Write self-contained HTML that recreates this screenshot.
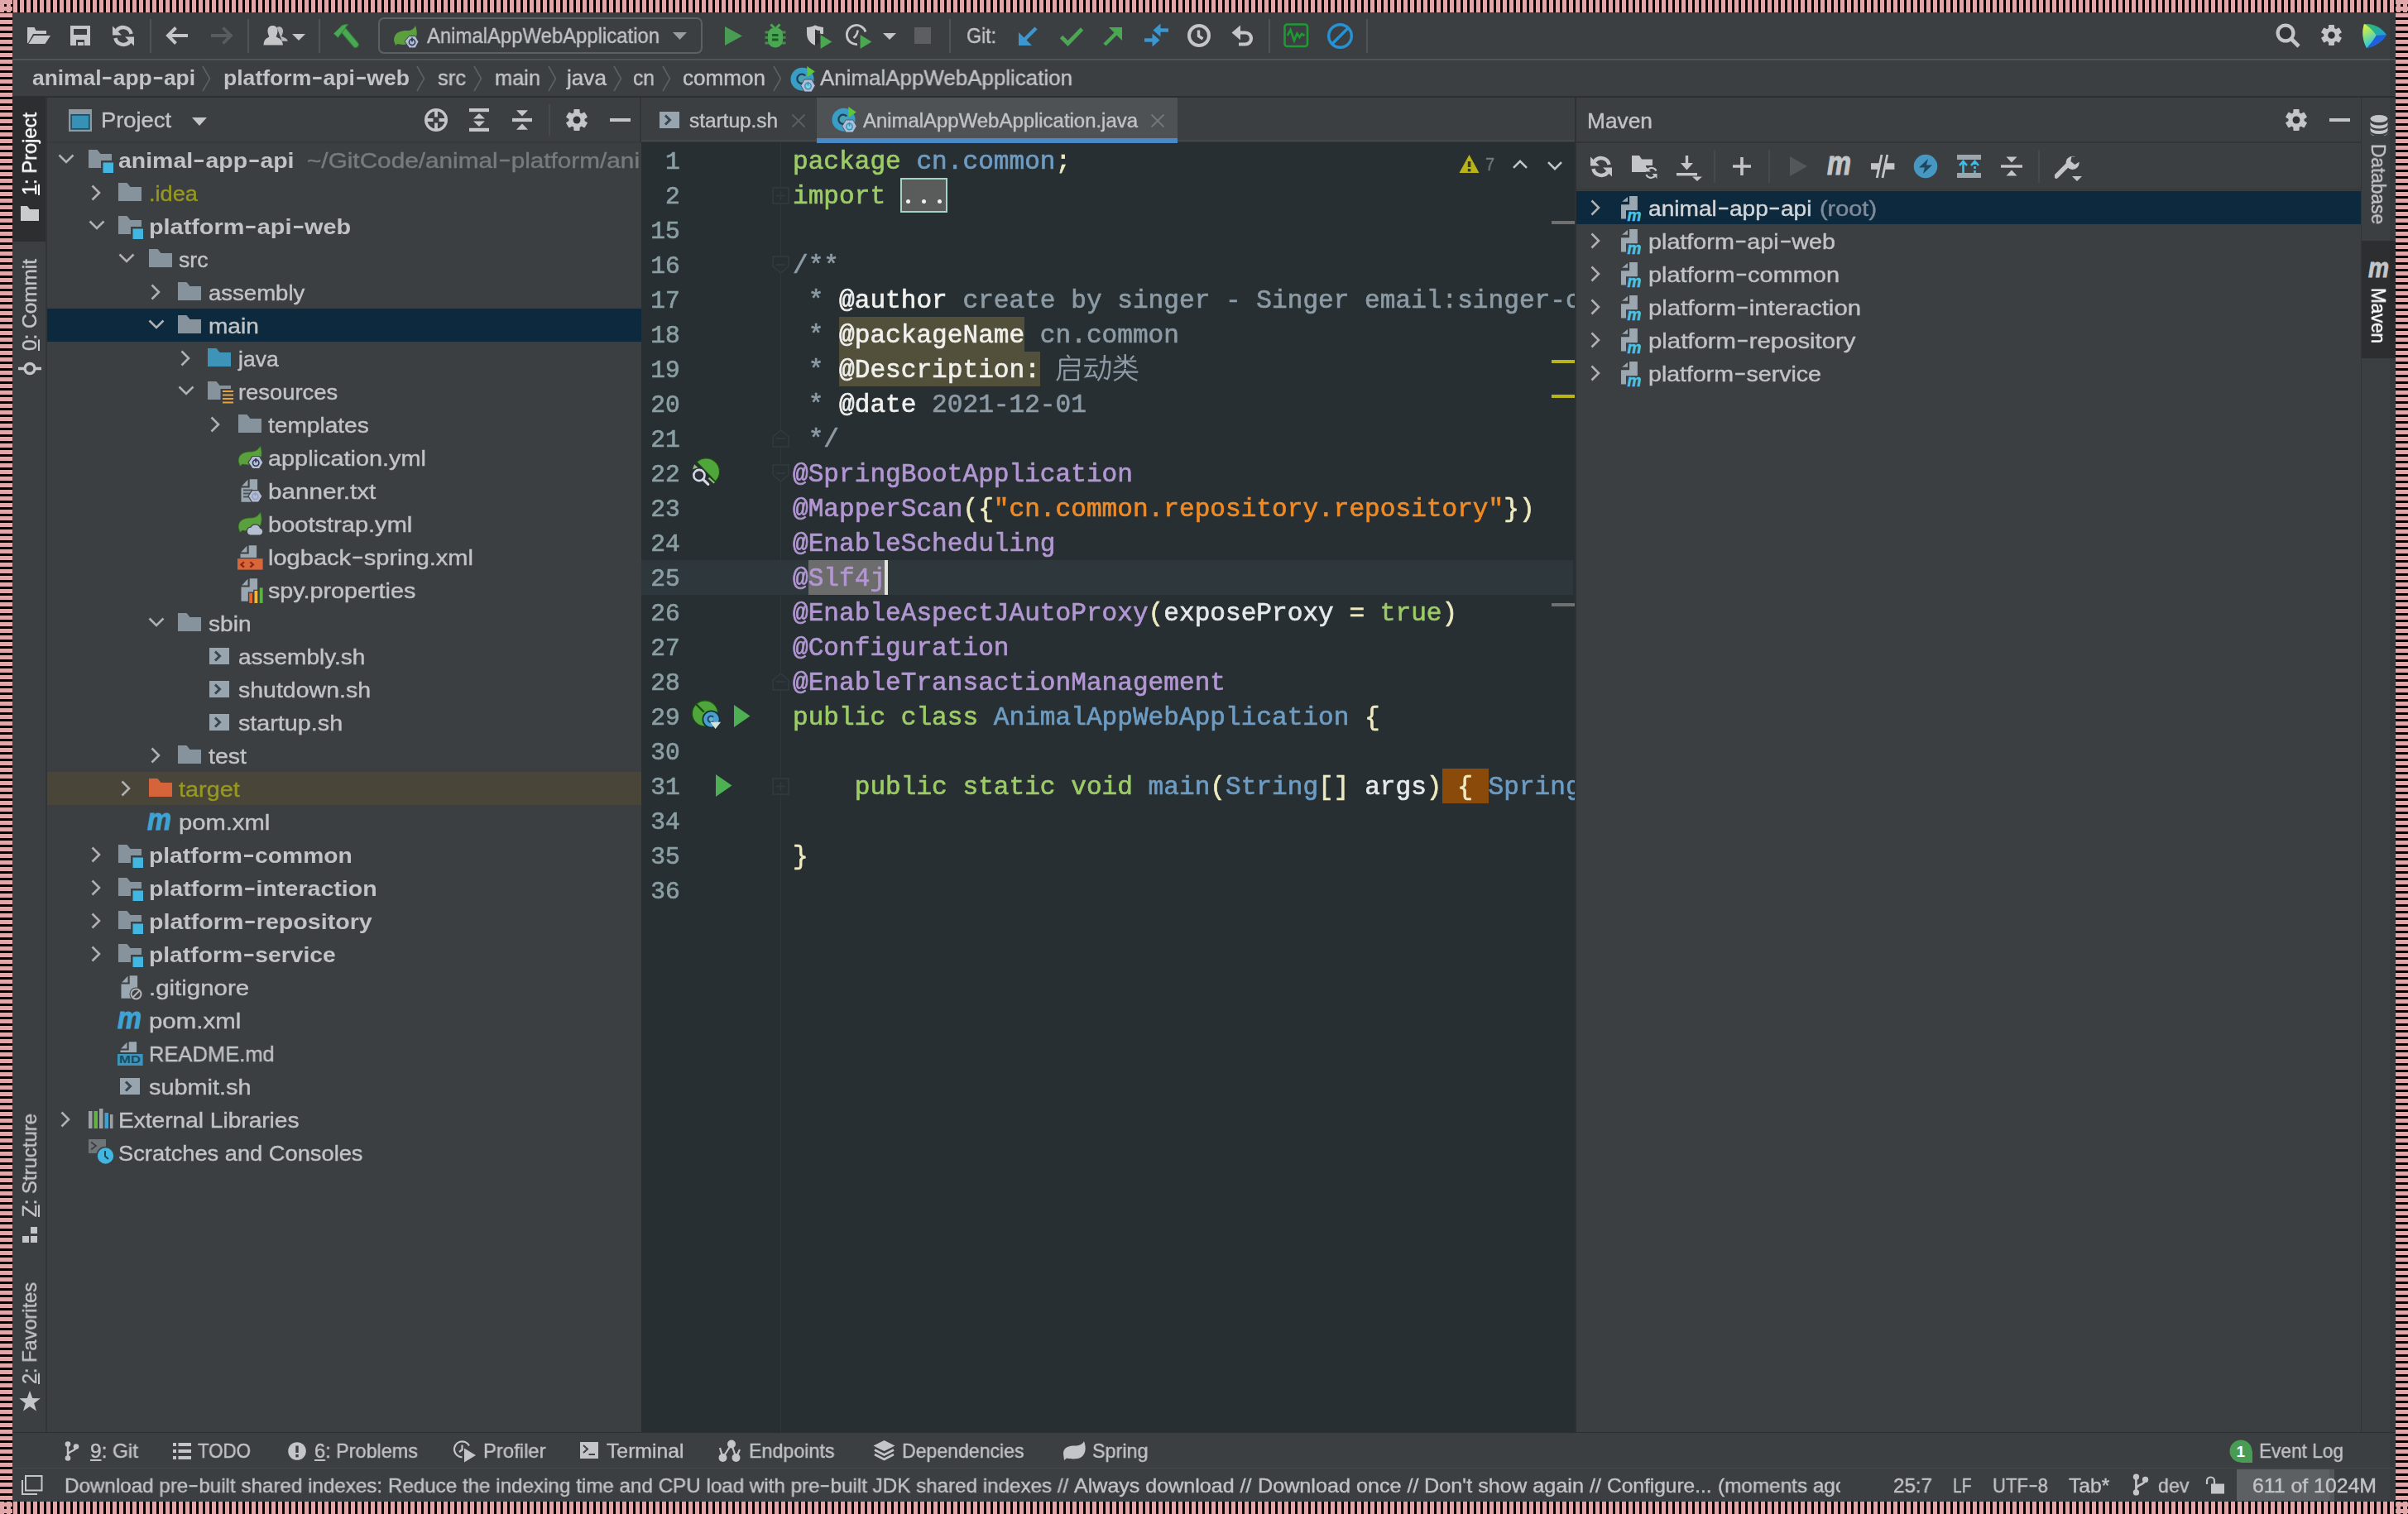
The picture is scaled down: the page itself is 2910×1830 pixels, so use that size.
<!DOCTYPE html>
<html><head><meta charset="utf-8"><title>IDE</title>
<style>
html,body{margin:0;padding:0;background:#000;}
body{width:2910px;height:1830px;position:relative;overflow:hidden;font-family:"Liberation Sans",sans-serif;}
div,span.t,svg{position:absolute;}
.t{white-space:pre;transform-origin:0 50%;display:block;will-change:transform;}
.s{font-family:"Liberation Sans",sans-serif;-webkit-text-stroke:0.4px;}
.m{font-family:"Liberation Mono",monospace;-webkit-text-stroke:0.65px;}
.cl{height:42px;line-height:42px;font-size:31.13px;}
i.hy{font-style:normal;display:inline-block;width:0.54em;text-align:center;transform:translateY(-0.075em) scaleX(1.55);}
</style></head>
<body>
<div style="left:0px;top:0px;width:2910px;height:15px;background:repeating-linear-gradient(90deg,#e2a7a8 0,#e2a7a8 5px,#000 5px,#000 8px);"></div>
<div style="left:0px;top:1815px;width:2910px;height:15px;background:repeating-linear-gradient(90deg,#e2a7a8 0,#e2a7a8 5px,#000 5px,#000 8px);"></div>
<div style="left:0px;top:0px;width:15px;height:1830px;background:repeating-linear-gradient(180deg,#e2a7a8 0,#e2a7a8 5px,#000 5px,#000 8px);"></div>
<div style="left:2895px;top:0px;width:15px;height:1830px;background:repeating-linear-gradient(180deg,#e2a7a8 0,#e2a7a8 5px,#000 5px,#000 8px);"></div>
<div style="left:0px;top:0px;width:15px;height:15px;background:#e2a7a8;"></div>
<div style="left:5px;top:5px;width:3px;height:3px;background:#000;"></div>
<div style="left:5px;top:13px;width:3px;height:2px;background:#000;"></div>
<div style="left:13px;top:5px;width:2px;height:3px;background:#000;"></div>
<div style="left:13px;top:13px;width:2px;height:2px;background:#000;"></div>
<div style="left:2895px;top:0px;width:15px;height:15px;background:#e2a7a8;"></div>
<div style="left:2895px;top:5px;width:1px;height:3px;background:#000;"></div>
<div style="left:2895px;top:13px;width:1px;height:2px;background:#000;"></div>
<div style="left:2901px;top:5px;width:3px;height:3px;background:#000;"></div>
<div style="left:2901px;top:13px;width:3px;height:2px;background:#000;"></div>
<div style="left:2909px;top:5px;width:1px;height:3px;background:#000;"></div>
<div style="left:2909px;top:13px;width:1px;height:2px;background:#000;"></div>
<div style="left:0px;top:1815px;width:15px;height:15px;background:#e2a7a8;"></div>
<div style="left:5px;top:1815px;width:3px;height:1px;background:#000;"></div>
<div style="left:5px;top:1821px;width:3px;height:3px;background:#000;"></div>
<div style="left:5px;top:1829px;width:3px;height:1px;background:#000;"></div>
<div style="left:13px;top:1815px;width:2px;height:1px;background:#000;"></div>
<div style="left:13px;top:1821px;width:2px;height:3px;background:#000;"></div>
<div style="left:13px;top:1829px;width:2px;height:1px;background:#000;"></div>
<div style="left:2895px;top:1815px;width:15px;height:15px;background:#e2a7a8;"></div>
<div style="left:2895px;top:1815px;width:1px;height:1px;background:#000;"></div>
<div style="left:2895px;top:1821px;width:1px;height:3px;background:#000;"></div>
<div style="left:2895px;top:1829px;width:1px;height:1px;background:#000;"></div>
<div style="left:2901px;top:1815px;width:3px;height:1px;background:#000;"></div>
<div style="left:2901px;top:1821px;width:3px;height:3px;background:#000;"></div>
<div style="left:2901px;top:1829px;width:3px;height:1px;background:#000;"></div>
<div style="left:2909px;top:1815px;width:1px;height:1px;background:#000;"></div>
<div style="left:2909px;top:1821px;width:1px;height:3px;background:#000;"></div>
<div style="left:2909px;top:1829px;width:1px;height:1px;background:#000;"></div>
<div style="left:15px;top:15px;width:2880px;height:1800px;background:#3c3f41;"></div>
<div style="left:15px;top:71px;width:2880px;height:2px;background:#4f5355;"></div>
<div style="left:15px;top:116px;width:2880px;height:2px;background:#2d2f31;"></div>
<div style="left:181px;top:23px;width:2px;height:41px;background:#505355;"></div>
<div style="left:299px;top:23px;width:2px;height:41px;background:#505355;"></div>
<div style="left:385px;top:23px;width:2px;height:41px;background:#505355;"></div>
<div style="left:1147px;top:23px;width:2px;height:41px;background:#505355;"></div>
<div style="left:1533px;top:23px;width:2px;height:41px;background:#505355;"></div>
<div style="left:1651px;top:23px;width:2px;height:41px;background:#505355;"></div>
<svg style="left:32px;top:31px" width="30" height="24" viewBox="0 0 30 24"><path d="M1 2 H9.5 L11.5 6 H24 V10 H8 L2 21 H1 Z" fill="#c3c5c7"/><path d="M9 12 H29 L22.5 22 H2.5 Z" fill="#c3c5c7"/></svg>
<svg style="left:85px;top:31px" width="24" height="24" viewBox="0 0 24 24"><path d="M0 0 H24 V24 H17 V17 H7 V24 H0 Z M4 4 V11 H20 V4 Z" fill="#c3c5c7" fill-rule="evenodd"/><rect x="9" y="20" width="7" height="4" fill="#c3c5c7"/></svg>
<svg style="left:135px;top:29.5px" width="28" height="27" viewBox="0 0 28 27"><path d="M23.6 11 A10 10 0 0 0 6 6.8" fill="none" stroke="#c3c5c7" stroke-width="4.4"/><path d="M4.4 16 A10 10 0 0 0 22 20.2" fill="none" stroke="#c3c5c7" stroke-width="4.4"/><path d="M1 1.5 V12.5 H12 Z" fill="#c3c5c7"/><path d="M27 25.5 V14.5 H16 Z" fill="#c3c5c7"/></svg>
<svg style="left:199px;top:31px" width="30" height="24" viewBox="0 0 30 24"><path d="M28 12 H5 M13.5 2.5 L4 12 L13.5 21.5" fill="none" stroke="#c3c5c7" stroke-width="3.9"/></svg>
<svg style="left:253px;top:31px" width="30" height="24" viewBox="0 0 30 24"><path d="M2 12 H25 M16.5 2.5 L26 12 L16.5 21.5" fill="none" stroke="#595c5e" stroke-width="3.8"/></svg>
<svg style="left:318px;top:30px" width="30" height="25" viewBox="0 0 30 25"><path d="M16.5 3 c4.5 -2 8 1 7.5 5.5 c-.3 2.6 -1.6 4 -1.8 5.6 c3 1.6 6.8 2 7.6 5.6 h-7 z" fill="#b4b6b8"/><path d="M5.5 7.5 C5.5 2.5 8.5 1 11.5 1 C14.5 1 17.5 2.5 17.5 7.5 C17.5 11 16 12.6 15.6 14.6 C18.5 16.4 23 16.6 24 24.5 H0.5 C1.2 16.6 4.5 16.4 7.4 14.6 C7 12.6 5.5 11 5.5 7.5 Z" fill="#c3c5c7"/></svg>
<svg style="left:353px;top:41px" width="16" height="8" viewBox="0 0 16 8"><path d="M0 0 H16 L8 8 Z" fill="#c3c5c7"/></svg>
<svg style="left:401px;top:27px" width="34" height="32" viewBox="0 0 34 32"><path d="M14 9.5 L28.6 26.8" stroke="#2f7d38" stroke-width="8.2" stroke-linecap="round" fill="none"/><path d="M14 9.5 L28.6 26.8" stroke="#4aa853" stroke-width="6.2" stroke-linecap="round" fill="none"/><path d="M2.2 13.6 L12.6 3.6 Q16 2 20 2.6 Q17 4.6 16.4 7 L7.4 18.6 Z" fill="#4aa853" stroke="#2f7d38" stroke-width="1"/></svg>
<div style="left:457px;top:21px;width:388px;height:40px;border:2px solid #5c6062;border-radius:7px"></div>
<svg style="left:475px;top:31px" width="32" height="28" viewBox="0 0 32 28"><path d="M1 18 C1 8 9 6 17 6 C22 6 25 4 27 0 C30 8 29 16 24 20 C18 24 9 23 5 22 L3 24 Z" fill="#5b9f3e"/><path d="M14 19 L19.5 12.5 L27 12.5 L31 19.5 L27 27 L19.5 27 Z" fill="#b5bdd6" stroke="#3c3f41" stroke-width="1"/><circle cx="23" cy="20" r="3.6" fill="none" stroke="#2b3a55" stroke-width="1.6"/><path d="M23 14.5 V19.5" stroke="#2b3a55" stroke-width="1.8"/></svg>
<span class="t s" style="left:516px;top:23.0px;height:40px;line-height:40px;font-size:26px;color:#c1c3c5;transform:scaleX(0.9185)">AnimalAppWebApplication</span>
<svg style="left:813px;top:39px" width="17" height="9" viewBox="0 0 17 9"><path d="M0 0 H17 L8.5 9 Z" fill="#9a9da0"/></svg>
<svg style="left:876px;top:32px" width="21" height="23" viewBox="0 0 21 23"><path d="M0 0 L21 11.5 L0 23 Z" fill="#499c54"/></svg>
<svg style="left:923px;top:28px" width="28" height="30" viewBox="0 0 28 30"><path d="M8.5 1.5 L13 6 M19.5 1.5 L15 6" stroke="#4aa853" stroke-width="3" fill="none"/><path d="M1.5 11 H26.5 M1.5 17.3 H26.5 M1.5 24 H26.5" stroke="#4aa853" stroke-width="2.8" opacity="0.75"/><path d="M14 5.5 C8 5.5 5 9 5 14 V20 C5 25.5 9 29.5 14 29.5 C19 29.5 23 25.5 23 20 V14 C23 9 20 5.5 14 5.5 Z" fill="#4aa853"/><path d="M10 14.5 H17.5 M10 20 H17.5" stroke="#1f5a2a" stroke-width="2.8"/></svg>
<svg style="left:974px;top:28px" width="33" height="32" viewBox="0 0 33 32"><path d="M1 5 C5 5 8 4 11 2.5 C14 4 17 5 21 5 V13 H17 V9 C15 9 13 8.5 11 7.5 V26.8 C5 24 1 20 1 12 Z" fill="#c4c6c8"/><path d="M11 7.5 V26.8 C13.5 25.5 15.5 24 17 22 V13 H13.5 V9.5 Z" fill="#2f3234"/><path d="M11 2.5 C14 4 17 5 21 5 V13 H17.5 V8.6 C15 8.4 13 7.8 11 6.8 Z" fill="#c4c6c8"/><path d="M17 13 L32.5 22.5 L17 32 Z" fill="#4aa853" stroke="#3c3f41" stroke-width="1.2"/></svg>
<svg style="left:1022px;top:28px" width="34" height="32" viewBox="0 0 34 32"><path d="M24 10.5 A11.6 11.6 0 1 0 14 25.6" fill="none" stroke="#c4c6c8" stroke-width="2.8"/><path d="M14.5 8.5 Q14.5 14 9.5 18" fill="none" stroke="#c4c6c8" stroke-width="2.6"/><path d="M17 13 L32.5 22.5 L17 32 Z" fill="#4aa853" stroke="#3c3f41" stroke-width="1.2"/></svg>
<svg style="left:1067px;top:40px" width="16" height="8" viewBox="0 0 16 8"><path d="M0 0 H16 L8 8 Z" fill="#c3c5c7"/></svg>
<div style="left:1105px;top:33px;width:20px;height:20px;background:#5c5e60;"></div>
<span class="t s" style="left:1168px;top:23.0px;height:40px;line-height:40px;font-size:26px;color:#c1c3c5;transform:scaleX(0.8899)">Git:</span>
<svg style="left:1229px;top:31px" width="26" height="26" viewBox="0 0 26 26"><path d="M23 3 L6 20" stroke="#3c97d0" stroke-width="4.4" fill="none"/><path d="M2 8 V24 H18 Z" fill="#3c97d0"/></svg>
<svg style="left:1280px;top:31px" width="30" height="26" viewBox="0 0 30 26"><path d="M2.5 13.5 L10.5 21.5 L27.5 4" stroke="#4aa853" stroke-width="4.8" fill="none"/></svg>
<svg style="left:1332px;top:31px" width="26" height="26" viewBox="0 0 26 26"><path d="M3 23 L20 6" stroke="#4aa853" stroke-width="4.4" fill="none"/><path d="M24 18 V2 H8 Z" fill="#4aa853"/></svg>
<svg style="left:1382px;top:28px" width="32" height="30" viewBox="0 0 32 30"><path d="M30 8.5 H18" stroke="#3c97d0" stroke-width="4.4"/><path d="M20.5 0.5 V16.5 L11.5 8.5 Z" fill="#3c97d0"/><path d="M1 20.5 H13" stroke="#3c97d0" stroke-width="4.4"/><path d="M10.5 12.5 V28.5 L19.5 20.5 Z" fill="#3c97d0"/></svg>
<svg style="left:1434px;top:28px" width="30" height="30" viewBox="0 0 30 30"><circle cx="15" cy="15" r="12" fill="none" stroke="#c3c5c7" stroke-width="4"/><path d="M14.5 8.5 V15.5 L19.5 19" fill="none" stroke="#c3c5c7" stroke-width="3.4"/></svg>
<svg style="left:1488px;top:28px" width="30" height="30" viewBox="0 0 30 30"><path d="M5 11.5 H17 A7 7 0 0 1 17 25.5 H9" fill="none" stroke="#c3c5c7" stroke-width="4.2"/><path d="M11 2.5 V20.5 L0.5 11.5 Z" fill="#c3c5c7"/></svg>
<svg style="left:1551px;top:28px" width="31" height="30" viewBox="0 0 31 30"><rect x="1.5" y="1.5" width="27.5" height="26.5" rx="3" fill="none" stroke="#1f9a33" stroke-width="2.6"/><path d="M5 15 L8.5 8 L13 21 L16.5 12.5 L19.5 17 L22 13 L25.5 15" fill="none" stroke="#1f9a33" stroke-width="2.6"/></svg>
<svg style="left:1603px;top:27px" width="33" height="33" viewBox="0 0 33 33"><circle cx="16.5" cy="16.5" r="13.8" fill="none" stroke="#2592d6" stroke-width="3.4"/><path d="M7 26 L26 7" stroke="#2592d6" stroke-width="3.4"/></svg>
<svg style="left:2750px;top:28px" width="31" height="31" viewBox="0 0 31 31"><circle cx="12" cy="12" r="9.4" fill="#323537" stroke="#c3c5c7" stroke-width="4.2"/><path d="M19 19 L28 28" stroke="#c3c5c7" stroke-width="4.6"/></svg>
<svg style="left:2805px;top:30px" width="25" height="25" viewBox="0 0 25 25"><rect x="9.00" y="0" width="7.00" height="25.00" rx="1" transform="rotate(0 12.5 12.5)" fill="#c3c5c7"/><rect x="9.00" y="0" width="7.00" height="25.00" rx="1" transform="rotate(60 12.5 12.5)" fill="#c3c5c7"/><rect x="9.00" y="0" width="7.00" height="25.00" rx="1" transform="rotate(120 12.5 12.5)" fill="#c3c5c7"/><circle cx="12.5" cy="12.5" r="9.25" fill="#c3c5c7"/><circle cx="12.5" cy="12.5" r="4.25" fill="#303335"/></svg>
<svg style="left:2854px;top:27px" width="32" height="32" viewBox="0 0 32 32"><defs><linearGradient id="lg1" x1="0" y1="0" x2="0.3" y2="1"><stop offset="0" stop-color="#f4f03c"/><stop offset="0.5" stop-color="#8fe07a"/><stop offset="1" stop-color="#27c3e8"/></linearGradient><linearGradient id="lg2" x1="0" y1="0" x2="1" y2="0.6"><stop offset="0" stop-color="#2fc14e"/><stop offset="1" stop-color="#1c9fe0"/></linearGradient></defs><path d="M3 2 C15 1 25 7 30 15 C24 24 16 29 6 31 C1 22 0 11 3 2 Z" fill="url(#lg2)"/><path d="M17 16 L30 15 C24 24 16 29 6 31 Z" fill="#1f5fe0"/><path d="M3 2 C9 5 15 11 17.5 16 C14 22 10 27 6 31 C1 22 0 11 3 2 Z" fill="url(#lg1)"/></svg>
<span class="t s" style="left:39px;top:74.0px;height:40px;line-height:40px;font-size:26px;color:#c1c3c5;font-weight:bold;-webkit-text-stroke:0;transform:scaleX(1.0142)">animal<i class="hy">-</i>app<i class="hy">-</i>api</span>
<svg style="left:243px;top:79px" width="14" height="32" viewBox="0 0 14 32"><path d="M2 1 L10.5 16 L2 31" fill="none" stroke="#5e6163" stroke-width="1.6"/></svg>
<span class="t s" style="left:270px;top:74.0px;height:40px;line-height:40px;font-size:26px;color:#c1c3c5;font-weight:bold;-webkit-text-stroke:0;transform:scaleX(1.0217)">platform<i class="hy">-</i>api<i class="hy">-</i>web</span>
<svg style="left:502px;top:79px" width="14" height="32" viewBox="0 0 14 32"><path d="M2 1 L10.5 16 L2 31" fill="none" stroke="#5e6163" stroke-width="1.6"/></svg>
<span class="t s" style="left:529px;top:74.0px;height:40px;line-height:40px;font-size:26px;color:#c1c3c5;transform:scaleX(0.9806)">src</span>
<svg style="left:571px;top:79px" width="14" height="32" viewBox="0 0 14 32"><path d="M2 1 L10.5 16 L2 31" fill="none" stroke="#5e6163" stroke-width="1.6"/></svg>
<span class="t s" style="left:598px;top:74.0px;height:40px;line-height:40px;font-size:26px;color:#c1c3c5;transform:scaleX(0.9759)">main</span>
<svg style="left:661px;top:79px" width="14" height="32" viewBox="0 0 14 32"><path d="M2 1 L10.5 16 L2 31" fill="none" stroke="#5e6163" stroke-width="1.6"/></svg>
<span class="t s" style="left:685px;top:74.0px;height:40px;line-height:40px;font-size:26px;color:#c1c3c5;transform:scaleX(1.0062)">java</span>
<svg style="left:740px;top:79px" width="14" height="32" viewBox="0 0 14 32"><path d="M2 1 L10.5 16 L2 31" fill="none" stroke="#5e6163" stroke-width="1.6"/></svg>
<span class="t s" style="left:765px;top:74.0px;height:40px;line-height:40px;font-size:26px;color:#c1c3c5;transform:scaleX(0.9465)">cn</span>
<svg style="left:799px;top:79px" width="14" height="32" viewBox="0 0 14 32"><path d="M2 1 L10.5 16 L2 31" fill="none" stroke="#5e6163" stroke-width="1.6"/></svg>
<span class="t s" style="left:825px;top:74.0px;height:40px;line-height:40px;font-size:26px;color:#c1c3c5;transform:scaleX(1.0030)">common</span>
<svg style="left:933px;top:79px" width="14" height="32" viewBox="0 0 14 32"><path d="M2 1 L10.5 16 L2 31" fill="none" stroke="#5e6163" stroke-width="1.6"/></svg>
<svg style="left:954.5px;top:79.5px" width="31" height="32" viewBox="0 0 31 32"><circle cx="14.5" cy="15.7" r="14" fill="#3a9dc6"/><circle cx="14" cy="15.3" r="5.6" fill="#4aa3b4"/><path d="M18.2 11.6 A5.6 5.6 0 1 0 18.2 19" fill="none" stroke="#1c4259" stroke-width="2.3"/><path d="M20.2 0 L29.8 6.4 L20.5 13 Z" fill="#5cc63c"/><path d="M12.8 23.5 L17.2 16 L25.8 16 L30.2 23.5 L25.8 31 L17.2 31 Z" fill="#b3bddb" stroke="#3c3f41" stroke-width="0.8"/><circle cx="21.5" cy="24" r="3.7" fill="#7fd0e0" stroke="#3f8fb4" stroke-width="1.5"/><path d="M21.5 18.8 V23.6" stroke="#3f8fb4" stroke-width="1.5"/></svg>
<span class="t s" style="left:991px;top:74.0px;height:40px;line-height:40px;font-size:26px;color:#c1c3c5;transform:scaleX(0.9970)">AnimalAppWebApplication</span>
<div style="left:55px;top:118px;width:1.5px;height:1613px;background:#323436;"></div>
<div style="left:15px;top:118px;width:40px;height:174px;background:#2c2e30;"></div>
<span class="t s" style="left:36px;top:221.0px;height:30px;line-height:30px;font-size:24px;color:#ffffff;transform:rotate(-90deg) scaleX(0.9863)"><u>1</u>: Project</span>
<svg style="left:25px;top:249px" width="22" height="18" viewBox="0 0 22 18"><path d="M0 0 H8 L11 4 H22 V18 H0 Z" fill="#c9cbcd"/></svg>
<span class="t s" style="left:36px;top:409.0px;height:30px;line-height:30px;font-size:24px;color:#c1c3c5;transform:rotate(-90deg) scaleX(1.0150)"><u>0</u>: Commit</span>
<svg style="left:22px;top:436px" width="28" height="19" viewBox="0 0 28 19"><circle cx="14" cy="9.5" r="6" fill="none" stroke="#c3c5c7" stroke-width="3.4"/><path d="M0 9.5 H7 M21 9.5 H28" stroke="#c3c5c7" stroke-width="3.4"/></svg>
<span class="t s" style="left:36px;top:1456.0px;height:30px;line-height:30px;font-size:24px;color:#c1c3c5;transform:rotate(-90deg) scaleX(0.9969)"><u>Z</u>: Structure</span>
<svg style="left:27px;top:1483px" width="19" height="20" viewBox="0 0 19 20"><rect x="10" y="0" width="8" height="8" fill="#c3c5c7"/><rect x="0" y="11" width="8" height="8" fill="#c3c5c7"/><rect x="10" y="11" width="8" height="8" fill="#c3c5c7"/></svg>
<span class="t s" style="left:36px;top:1658.0px;height:30px;line-height:30px;font-size:24px;color:#c1c3c5;transform:rotate(-90deg) scaleX(0.9809)"><u>2</u>: Favorites</span>
<svg style="left:23px;top:1681px" width="26" height="25" viewBox="0 0 26 25"><path d="M13 0 L16.2 9 L25.8 9.3 L18.2 15.2 L21 24.5 L13 19 L5 24.5 L7.8 15.2 L0.2 9.3 L9.8 9 Z" fill="#c3c5c7"/></svg>
<div style="left:57px;top:171px;width:718px;height:2px;background:#37393b;"></div>
<svg style="left:83px;top:132px" width="28" height="27" viewBox="0 0 28 27"><rect x="0" y="0" width="28" height="27" fill="#8f989f"/><rect x="2.3" y="6" width="23.4" height="18.7" fill="#1f4f66"/><rect x="4" y="7.8" width="20" height="15.2" fill="#3691b4"/></svg>
<span class="t s" style="left:122px;top:125.0px;height:40px;line-height:40px;font-size:26px;color:#c1c3c5;transform:scaleX(1.0504)">Project</span>
<svg style="left:232px;top:142px" width="18" height="10" viewBox="0 0 18 10"><path d="M0 0 H18 L9 10 Z" fill="#c3c5c7"/></svg>
<svg style="left:512px;top:130px" width="30" height="30" viewBox="0 0 30 30"><circle cx="15" cy="15" r="12.3" fill="none" stroke="#c3c5c7" stroke-width="3.4"/><path d="M15 2 V11.5 M15 18.5 V28 M2 15 H11.5 M18.5 15 H28" stroke="#c3c5c7" stroke-width="3.8"/></svg>
<svg style="left:567px;top:131px" width="24" height="28" viewBox="0 0 24 28"><rect x="0" y="0" width="24" height="4.2" fill="#c3c5c7"/><rect x="0" y="23.8" width="24" height="4.2" fill="#c3c5c7"/><path d="M12 6 L19 12.6 H5 Z M12 22 L19 15.4 H5 Z" fill="#c3c5c7"/></svg>
<svg style="left:619px;top:131px" width="24" height="28" viewBox="0 0 24 28"><rect x="0" y="11.9" width="24" height="4.2" fill="#c3c5c7"/><path d="M12 9.5 L19 2.3 H5 Z M12 18.5 L19 25.7 H5 Z" fill="#c3c5c7"/></svg>
<div style="left:663px;top:126px;width:2px;height:38px;background:#47494b;"></div>
<svg style="left:684px;top:132px" width="26" height="26" viewBox="0 0 26 26"><rect x="9.36" y="0" width="7.28" height="26.00" rx="1" transform="rotate(0 13.0 13.0)" fill="#c3c5c7"/><rect x="9.36" y="0" width="7.28" height="26.00" rx="1" transform="rotate(60 13.0 13.0)" fill="#c3c5c7"/><rect x="9.36" y="0" width="7.28" height="26.00" rx="1" transform="rotate(120 13.0 13.0)" fill="#c3c5c7"/><circle cx="13.0" cy="13.0" r="9.62" fill="#c3c5c7"/><circle cx="13.0" cy="13.0" r="4.42" fill="#303335"/></svg>
<div style="left:737px;top:143px;width:25px;height:4px;background:#c3c5c7;"></div>
<svg style="left:69px;top:184px" width="22" height="16" viewBox="0 0 22 16"><path d="M2.5 3.5 L11 12 L19.5 3.5" fill="none" stroke="#afb1b3" stroke-width="2.6"/></svg>
<svg style="left:106.5px;top:181px" width="32" height="30" viewBox="0 0 32 30"><path d="M0 0 H10.5 L14.5 5 H28 V22 H0 Z" fill="#87939c"/><rect x="15" y="13" width="17" height="17" fill="#3c3f41"/><rect x="17.5" y="15.5" width="12.5" height="12.5" fill="#40b6e0"/></svg>
<span class="t s" style="left:143px;top:174.0px;height:40px;line-height:40px;font-size:26px;color:#c1c3c5;font-weight:bold;-webkit-text-stroke:0;transform:scaleX(1.0940)">animal<i class="hy">-</i>app<i class="hy">-</i>api</span>
<svg style="left:107.5px;top:222px" width="16" height="22" viewBox="0 0 16 22"><path d="M3.5 2.5 L12 11 L3.5 19.5" fill="none" stroke="#afb1b3" stroke-width="2.6"/></svg>
<svg style="left:143.0px;top:221px" width="28" height="22" viewBox="0 0 28 22"><path d="M0 0 H10.5 L14.5 5 H28 V22 H0 Z" fill="#87939c"/></svg>
<span class="t s" style="left:179.5px;top:214.0px;height:40px;line-height:40px;font-size:26px;color:#96981f;transform:scaleX(1.0463)">.idea</span>
<svg style="left:105.5px;top:264px" width="22" height="16" viewBox="0 0 22 16"><path d="M2.5 3.5 L11 12 L19.5 3.5" fill="none" stroke="#afb1b3" stroke-width="2.6"/></svg>
<svg style="left:143.0px;top:261px" width="32" height="30" viewBox="0 0 32 30"><path d="M0 0 H10.5 L14.5 5 H28 V22 H0 Z" fill="#87939c"/><rect x="15" y="13" width="17" height="17" fill="#3c3f41"/><rect x="17.5" y="15.5" width="12.5" height="12.5" fill="#40b6e0"/></svg>
<span class="t s" style="left:179.5px;top:254.0px;height:40px;line-height:40px;font-size:26px;color:#c1c3c5;font-weight:bold;-webkit-text-stroke:0;transform:scaleX(1.1084)">platform<i class="hy">-</i>api<i class="hy">-</i>web</span>
<svg style="left:142px;top:304px" width="22" height="16" viewBox="0 0 22 16"><path d="M2.5 3.5 L11 12 L19.5 3.5" fill="none" stroke="#afb1b3" stroke-width="2.6"/></svg>
<svg style="left:179.5px;top:301px" width="28" height="22" viewBox="0 0 28 22"><path d="M0 0 H10.5 L14.5 5 H28 V22 H0 Z" fill="#87939c"/></svg>
<span class="t s" style="left:216px;top:294.0px;height:40px;line-height:40px;font-size:26px;color:#c1c3c5;transform:scaleX(1.0239)">src</span>
<svg style="left:179.5px;top:342px" width="16" height="22" viewBox="0 0 16 22"><path d="M3.5 2.5 L12 11 L3.5 19.5" fill="none" stroke="#afb1b3" stroke-width="2.6"/></svg>
<svg style="left:215.0px;top:341px" width="28" height="22" viewBox="0 0 28 22"><path d="M0 0 H10.5 L14.5 5 H28 V22 H0 Z" fill="#87939c"/></svg>
<span class="t s" style="left:251.5px;top:334.0px;height:40px;line-height:40px;font-size:26px;color:#c1c3c5;transform:scaleX(1.0589)">assembly</span>
<div style="left:56.5px;top:373px;width:718.5px;height:40px;background:#0d293e;"></div>
<svg style="left:177.5px;top:384px" width="22" height="16" viewBox="0 0 22 16"><path d="M2.5 3.5 L11 12 L19.5 3.5" fill="none" stroke="#afb1b3" stroke-width="2.6"/></svg>
<svg style="left:215.0px;top:381px" width="28" height="22" viewBox="0 0 28 22"><path d="M0 0 H10.5 L14.5 5 H28 V22 H0 Z" fill="#87939c"/></svg>
<span class="t s" style="left:251.5px;top:374.0px;height:40px;line-height:40px;font-size:26px;color:#c1c3c5;transform:scaleX(1.0788)">main</span>
<svg style="left:215.5px;top:422px" width="16" height="22" viewBox="0 0 16 22"><path d="M3.5 2.5 L12 11 L3.5 19.5" fill="none" stroke="#afb1b3" stroke-width="2.6"/></svg>
<svg style="left:251.0px;top:421px" width="28" height="22" viewBox="0 0 28 22"><path d="M0 0 H10.5 L14.5 5 H28 V22 H0 Z" fill="#3d93b8"/></svg>
<span class="t s" style="left:287.5px;top:414.0px;height:40px;line-height:40px;font-size:26px;color:#c1c3c5;transform:scaleX(1.0209)">java</span>
<svg style="left:213.5px;top:464px" width="22" height="16" viewBox="0 0 22 16"><path d="M2.5 3.5 L11 12 L19.5 3.5" fill="none" stroke="#afb1b3" stroke-width="2.6"/></svg>
<svg style="left:251.0px;top:461px" width="32" height="30" viewBox="0 0 32 30"><path d="M0 0 H10.5 L14.5 5 H28 V22 H0 Z" fill="#87939c"/><rect x="15.5" y="9" width="17" height="18" fill="#3c3f41"/><path d="M18 12 H31 M18 16.5 H31 M18 21 H31 M18 25.5 H31" stroke="#e8a33d" stroke-width="2.2"/></svg>
<span class="t s" style="left:287.5px;top:454.0px;height:40px;line-height:40px;font-size:26px;color:#c1c3c5;transform:scaleX(1.0521)">resources</span>
<svg style="left:252px;top:502px" width="16" height="22" viewBox="0 0 16 22"><path d="M3.5 2.5 L12 11 L3.5 19.5" fill="none" stroke="#afb1b3" stroke-width="2.6"/></svg>
<svg style="left:287.5px;top:501px" width="28" height="22" viewBox="0 0 28 22"><path d="M0 0 H10.5 L14.5 5 H28 V22 H0 Z" fill="#87939c"/></svg>
<span class="t s" style="left:324px;top:494.0px;height:40px;line-height:40px;font-size:26px;color:#c1c3c5;transform:scaleX(1.0804)">templates</span>
<svg style="left:287.5px;top:538px" width="32" height="30" viewBox="0 0 32 30"><path d="M0 19.5 C0 10 8 8 15 8 C20 8 24 6 26.5 1 C29.5 9 28.5 17 23.5 21 C18 25 9 24 5 23 L2 25.5 Z" fill="#5aa03c" stroke="#2f6a22" stroke-width="0.8"/><path d="M12 21 L17 13.5 L25.5 13.5 L30 21 L25.5 28.5 L17 28.5 Z" fill="#b5bdd6" stroke="#3c3f41" stroke-width="1.2"/><circle cx="21.2" cy="21.5" r="3.7" fill="none" stroke="#2b3a55" stroke-width="1.6"/><path d="M21.2 16 V21" stroke="#2b3a55" stroke-width="1.8"/></svg>
<span class="t s" style="left:324px;top:534.0px;height:40px;line-height:40px;font-size:26px;color:#c1c3c5;transform:scaleX(1.1106)">application.yml</span>
<svg style="left:287.5px;top:578px" width="32" height="31" viewBox="0 0 32 31"><path d="M11.5 1.7 V9.6 H4.2 Z" fill="#9aa6b0"/><path d="M13.7 1.2 H23.1 V28.8 H3.5 V11.4 H13.7 Z" fill="#9aa6b0"/><path d="M6 14.5 H17 M6 18.5 H14 M6 22.5 H12" stroke="#4a545c" stroke-width="1.8"/><path d="M12 21.8 L16.5 14.6 L24.5 14.6 L29 21.8 L24.5 29 L16.5 29 Z" fill="#b5bdd6" stroke="#3c3f41" stroke-width="1.2"/><circle cx="20.5" cy="22" r="3.5" fill="none" stroke="#8fa0c4" stroke-width="1.5"/><path d="M20.5 16.8 V21.4" stroke="#8fa0c4" stroke-width="1.6"/></svg>
<span class="t s" style="left:324px;top:574.0px;height:40px;line-height:40px;font-size:26px;color:#c1c3c5;transform:scaleX(1.1401)">banner.txt</span>
<svg style="left:287.5px;top:618px" width="32" height="31" viewBox="0 0 32 31"><path d="M0 19.5 C0 10 8 8 15 8 C20 8 24 6 26.5 1 C29.5 9 28.5 17 23.5 21 C18 25 9 24 5 23 L2 25.5 Z" fill="#5aa03c" stroke="#2f6a22" stroke-width="0.8"/><path d="M14 29 a5 5 0 0 1 1 -9.8 a6.3 6.3 0 0 1 11.5 1 a4.6 4.6 0 0 1 0 8.8 Z" fill="#b4bfd0" stroke="#3c3f41" stroke-width="1.2"/></svg>
<span class="t s" style="left:324px;top:614.0px;height:40px;line-height:40px;font-size:26px;color:#c1c3c5;transform:scaleX(1.1167)">bootstrap.yml</span>
<svg style="left:286.5px;top:658px" width="32" height="32" viewBox="0 0 32 32"><path d="M11.5 1.7 V9.6 H4.2 Z" fill="#9aa6b0"/><path d="M13.7 1.2 H23.1 V16 H3.5 V11.4 H13.7 Z" fill="#9aa6b0"/><rect x="0" y="17.2" width="30.6" height="13.4" fill="#d9663a"/><path d="M8 21.3 L4.3 24.4 L8 27.6 M15.3 21.3 L19 24.4 L15.3 27.6" fill="none" stroke="#8a2510" stroke-width="2.1"/></svg>
<span class="t s" style="left:324px;top:654.0px;height:40px;line-height:40px;font-size:26px;color:#c1c3c5;transform:scaleX(1.1164)">logback<i class="hy">-</i>spring.xml</span>
<svg style="left:287.5px;top:698px" width="32" height="32" viewBox="0 0 32 32"><path d="M11.5 1.7 V9.6 H4.2 Z" fill="#9aa6b0"/><path d="M13.7 1.2 H23.1 V28.8 H3.5 V11.4 H13.7 Z" fill="#9aa6b0"/><path d="M11.8 17.6 H18.2 V14.8 H24.5 V11.2 H31 V32 H11.8 Z" fill="#3c3f41"/><rect x="13.2" y="18.8" width="3.8" height="12.2" fill="#e8672c"/><rect x="19.5" y="16" width="3.8" height="15" fill="#f2b73c"/><rect x="25.8" y="12.4" width="3.8" height="18.6" fill="#59b244"/></svg>
<span class="t s" style="left:324px;top:694.0px;height:40px;line-height:40px;font-size:26px;color:#c1c3c5;transform:scaleX(1.1049)">spy.properties</span>
<svg style="left:177.5px;top:744px" width="22" height="16" viewBox="0 0 22 16"><path d="M2.5 3.5 L11 12 L19.5 3.5" fill="none" stroke="#afb1b3" stroke-width="2.6"/></svg>
<svg style="left:215.0px;top:741px" width="28" height="22" viewBox="0 0 28 22"><path d="M0 0 H10.5 L14.5 5 H28 V22 H0 Z" fill="#87939c"/></svg>
<span class="t s" style="left:251.5px;top:734.0px;height:40px;line-height:40px;font-size:26px;color:#c1c3c5;transform:scaleX(1.0796)">sbin</span>
<svg style="left:253.0px;top:783px" width="24" height="20" viewBox="0 0 24 20"><rect x="0" y="0" width="24" height="20" fill="#98a5ae"/><path d="M7 4.5 L12.5 10 L7 15.5" fill="none" stroke="#39464f" stroke-width="3"/></svg>
<span class="t s" style="left:287.5px;top:774.0px;height:40px;line-height:40px;font-size:26px;color:#c1c3c5;transform:scaleX(1.0759)">assembly.sh</span>
<svg style="left:253.0px;top:823px" width="24" height="20" viewBox="0 0 24 20"><rect x="0" y="0" width="24" height="20" fill="#98a5ae"/><path d="M7 4.5 L12.5 10 L7 15.5" fill="none" stroke="#39464f" stroke-width="3"/></svg>
<span class="t s" style="left:287.5px;top:814.0px;height:40px;line-height:40px;font-size:26px;color:#c1c3c5;transform:scaleX(1.0960)">shutdown.sh</span>
<svg style="left:253.0px;top:863px" width="24" height="20" viewBox="0 0 24 20"><rect x="0" y="0" width="24" height="20" fill="#98a5ae"/><path d="M7 4.5 L12.5 10 L7 15.5" fill="none" stroke="#39464f" stroke-width="3"/></svg>
<span class="t s" style="left:287.5px;top:854.0px;height:40px;line-height:40px;font-size:26px;color:#c1c3c5;transform:scaleX(1.1045)">startup.sh</span>
<svg style="left:179.5px;top:902px" width="16" height="22" viewBox="0 0 16 22"><path d="M3.5 2.5 L12 11 L3.5 19.5" fill="none" stroke="#afb1b3" stroke-width="2.6"/></svg>
<svg style="left:215.0px;top:901px" width="28" height="22" viewBox="0 0 28 22"><path d="M0 0 H10.5 L14.5 5 H28 V22 H0 Z" fill="#87939c"/></svg>
<span class="t s" style="left:251.5px;top:894.0px;height:40px;line-height:40px;font-size:26px;color:#c1c3c5;transform:scaleX(1.0925)">test</span>
<div style="left:56.5px;top:933px;width:718.5px;height:40px;background:#494539;"></div>
<svg style="left:144px;top:942px" width="16" height="22" viewBox="0 0 16 22"><path d="M3.5 2.5 L12 11 L3.5 19.5" fill="none" stroke="#afb1b3" stroke-width="2.6"/></svg>
<svg style="left:179.5px;top:941px" width="28" height="22" viewBox="0 0 28 22"><path d="M0 0 H10.5 L14.5 5 H28 V22 H0 Z" fill="#d6643a"/></svg>
<span class="t s" style="left:216px;top:934.0px;height:40px;line-height:40px;font-size:26px;color:#96981f;transform:scaleX(1.1083)">target</span>
<svg style="left:175.0px;top:980.2px" width="38" height="27.8" viewBox="0 0 38 27.8"><text x="3" y="22.80" font-family="Liberation Sans" font-weight="bold" font-style="italic" font-size="37.36" fill="#3ea3d2" stroke="#3ea3d2" stroke-width="1.0" textLength="29" lengthAdjust="spacingAndGlyphs">m</text></svg>
<span class="t s" style="left:216px;top:974.0px;height:40px;line-height:40px;font-size:26px;color:#c1c3c5;transform:scaleX(1.1216)">pom.xml</span>
<svg style="left:107.5px;top:1022px" width="16" height="22" viewBox="0 0 16 22"><path d="M3.5 2.5 L12 11 L3.5 19.5" fill="none" stroke="#afb1b3" stroke-width="2.6"/></svg>
<svg style="left:143.0px;top:1021px" width="32" height="30" viewBox="0 0 32 30"><path d="M0 0 H10.5 L14.5 5 H28 V22 H0 Z" fill="#87939c"/><rect x="15" y="13" width="17" height="17" fill="#3c3f41"/><rect x="17.5" y="15.5" width="12.5" height="12.5" fill="#40b6e0"/></svg>
<span class="t s" style="left:179.5px;top:1014.0px;height:40px;line-height:40px;font-size:26px;color:#c1c3c5;font-weight:bold;-webkit-text-stroke:0;transform:scaleX(1.0854)">platform<i class="hy">-</i>common</span>
<svg style="left:107.5px;top:1062px" width="16" height="22" viewBox="0 0 16 22"><path d="M3.5 2.5 L12 11 L3.5 19.5" fill="none" stroke="#afb1b3" stroke-width="2.6"/></svg>
<svg style="left:143.0px;top:1061px" width="32" height="30" viewBox="0 0 32 30"><path d="M0 0 H10.5 L14.5 5 H28 V22 H0 Z" fill="#87939c"/><rect x="15" y="13" width="17" height="17" fill="#3c3f41"/><rect x="17.5" y="15.5" width="12.5" height="12.5" fill="#40b6e0"/></svg>
<span class="t s" style="left:179.5px;top:1054.0px;height:40px;line-height:40px;font-size:26px;color:#c1c3c5;font-weight:bold;-webkit-text-stroke:0;transform:scaleX(1.0982)">platform<i class="hy">-</i>interaction</span>
<svg style="left:107.5px;top:1102px" width="16" height="22" viewBox="0 0 16 22"><path d="M3.5 2.5 L12 11 L3.5 19.5" fill="none" stroke="#afb1b3" stroke-width="2.6"/></svg>
<svg style="left:143.0px;top:1101px" width="32" height="30" viewBox="0 0 32 30"><path d="M0 0 H10.5 L14.5 5 H28 V22 H0 Z" fill="#87939c"/><rect x="15" y="13" width="17" height="17" fill="#3c3f41"/><rect x="17.5" y="15.5" width="12.5" height="12.5" fill="#40b6e0"/></svg>
<span class="t s" style="left:179.5px;top:1094.0px;height:40px;line-height:40px;font-size:26px;color:#c1c3c5;font-weight:bold;-webkit-text-stroke:0;transform:scaleX(1.1000)">platform<i class="hy">-</i>repository</span>
<svg style="left:107.5px;top:1142px" width="16" height="22" viewBox="0 0 16 22"><path d="M3.5 2.5 L12 11 L3.5 19.5" fill="none" stroke="#afb1b3" stroke-width="2.6"/></svg>
<svg style="left:143.0px;top:1141px" width="32" height="30" viewBox="0 0 32 30"><path d="M0 0 H10.5 L14.5 5 H28 V22 H0 Z" fill="#87939c"/><rect x="15" y="13" width="17" height="17" fill="#3c3f41"/><rect x="17.5" y="15.5" width="12.5" height="12.5" fill="#40b6e0"/></svg>
<span class="t s" style="left:179.5px;top:1134.0px;height:40px;line-height:40px;font-size:26px;color:#c1c3c5;font-weight:bold;-webkit-text-stroke:0;transform:scaleX(1.0872)">platform<i class="hy">-</i>service</span>
<svg style="left:143.0px;top:1178px" width="32" height="32" viewBox="0 0 32 32"><path d="M11.5 1.7 V9.6 H4.2 Z" fill="#9aa6b0"/><path d="M13.7 1.2 H23.1 V28.8 H3.5 V11.4 H13.7 Z" fill="#9aa6b0"/><circle cx="21.5" cy="23.5" r="8" fill="#3c3f41"/><circle cx="21.5" cy="23.5" r="6" fill="none" stroke="#b4b6b8" stroke-width="2"/><path d="M17.5 27.5 L25.5 19.5" stroke="#b4b6b8" stroke-width="2"/></svg>
<span class="t s" style="left:179.5px;top:1174.0px;height:40px;line-height:40px;font-size:26px;color:#c1c3c5;transform:scaleX(1.1330)">.gitignore</span>
<svg style="left:138.5px;top:1220.2px" width="38" height="27.8" viewBox="0 0 38 27.8"><text x="3" y="22.80" font-family="Liberation Sans" font-weight="bold" font-style="italic" font-size="37.36" fill="#3ea3d2" stroke="#3ea3d2" stroke-width="1.0" textLength="29" lengthAdjust="spacingAndGlyphs">m</text></svg>
<span class="t s" style="left:179.5px;top:1214.0px;height:40px;line-height:40px;font-size:26px;color:#c1c3c5;transform:scaleX(1.1318)">pom.xml</span>
<svg style="left:142.0px;top:1258px" width="32" height="32" viewBox="0 0 32 32"><path d="M11.5 1.7 V9.6 H4.2 Z" fill="#9aa6b0"/><path d="M13.7 1.2 H23.1 V14 H3.5 V11.4 H13.7 Z" fill="#9aa6b0"/><rect x="0" y="16" width="30.6" height="14" fill="#3a96be"/><text x="2" y="27.3" font-family="Liberation Sans" font-weight="bold" font-size="12.5" fill="#1d4a60" textLength="26" lengthAdjust="spacingAndGlyphs">MD</text></svg>
<span class="t s" style="left:179.5px;top:1254.0px;height:40px;line-height:40px;font-size:26px;color:#c1c3c5;transform:scaleX(0.9814)">README.md</span>
<svg style="left:145.0px;top:1303px" width="24" height="20" viewBox="0 0 24 20"><rect x="0" y="0" width="24" height="20" fill="#98a5ae"/><path d="M7 4.5 L12.5 10 L7 15.5" fill="none" stroke="#39464f" stroke-width="3"/></svg>
<span class="t s" style="left:179.5px;top:1294.0px;height:40px;line-height:40px;font-size:26px;color:#c1c3c5;transform:scaleX(1.1100)">submit.sh</span>
<svg style="left:71px;top:1342px" width="16" height="22" viewBox="0 0 16 22"><path d="M3.5 2.5 L12 11 L3.5 19.5" fill="none" stroke="#afb1b3" stroke-width="2.6"/></svg>
<svg style="left:106.5px;top:1338px" width="32" height="30" viewBox="0 0 32 30"><rect x="0" y="5" width="4.5" height="21" fill="#9aa0a6"/><rect x="6.5" y="5" width="4.5" height="21" fill="#62b543"/><rect x="13" y="2" width="4.5" height="24" fill="#9aa0a6"/><rect x="19.5" y="7" width="4.5" height="19" fill="#40a0d0"/><rect x="26" y="9" width="3.5" height="17" fill="#9aa0a6"/></svg>
<span class="t s" style="left:143px;top:1334.0px;height:40px;line-height:40px;font-size:26px;color:#c1c3c5;transform:scaleX(1.0800)">External Libraries</span>
<svg style="left:106.5px;top:1377px" width="34" height="32" viewBox="0 0 34 32"><rect x="0" y="0" width="21" height="17" fill="#6e7478"/><path d="M3 3.5 L9 8 L3 12.5" fill="none" stroke="#3c3f41" stroke-width="1.8"/><circle cx="20.5" cy="20" r="10.5" fill="#40b6e0" stroke="#3c3f41" stroke-width="1.6"/><path d="M20 14 V20.5 L24 24" fill="none" stroke="#20455a" stroke-width="2"/></svg>
<span class="t s" style="left:143px;top:1374.0px;height:40px;line-height:40px;font-size:26px;color:#c1c3c5;transform:scaleX(1.0485)">Scratches and Consoles</span>
<div style="left:368px;top:173px;width:407px;height:40px;overflow:hidden">
<span class="t s" style="left:2.5px;top:1.0px;height:40px;line-height:40px;font-size:26px;color:#787b7d;transform:scaleX(1.1437)">~/GitCode/animal<i class="hy">-</i>platform/ani</span>
</div>
<div style="left:775px;top:171.5px;width:1128px;height:1559.5px;background:#272f32;"></div>
<div style="left:773px;top:118px;width:2px;height:54px;background:#333537;"></div>
<div style="left:775px;top:169px;width:1128px;height:1.5px;background:#43474a;"></div>
<div style="left:775px;top:170.5px;width:1128px;height:1px;background:#35383a;"></div>
<div style="left:987px;top:118px;width:436px;height:49.5px;background:#4e5254;"></div>
<div style="left:987px;top:167px;width:436px;height:6px;background:#4a88c7;"></div>
<svg style="left:797px;top:135px" width="24" height="20" viewBox="0 0 24 20"><rect width="24" height="20" fill="#98a5ae"/><path d="M7 4.5 L12.5 10 L7 15.5" fill="none" stroke="#39464f" stroke-width="3"/></svg>
<span class="t s" style="left:833px;top:126.0px;height:40px;line-height:40px;font-size:23px;color:#c1c3c5;transform:scaleX(1.0594)">startup.sh</span>
<svg style="left:956px;top:137px" width="18" height="18" viewBox="0 0 18 18"><path d="M1.5 1.5 L16.5 16.5 M16.5 1.5 L1.5 16.5" stroke="#5c5f61" stroke-width="1.8"/></svg>
<svg style="left:1004.5px;top:128.5px" width="31" height="32" viewBox="0 0 31 32"><circle cx="14.5" cy="15.7" r="14" fill="#3a9dc6"/><circle cx="14" cy="15.3" r="5.6" fill="#4aa3b4"/><path d="M18.2 11.6 A5.6 5.6 0 1 0 18.2 19" fill="none" stroke="#1c4259" stroke-width="2.3"/><path d="M20.2 0 L29.8 6.4 L20.5 13 Z" fill="#5cc63c"/><path d="M12.8 23.5 L17.2 16 L25.8 16 L30.2 23.5 L25.8 31 L17.2 31 Z" fill="#b3bddb" stroke="#4e5254" stroke-width="0.8"/><circle cx="21.5" cy="24" r="3.7" fill="#7fd0e0" stroke="#3f8fb4" stroke-width="1.5"/><path d="M21.5 18.8 V23.6" stroke="#3f8fb4" stroke-width="1.5"/></svg>
<span class="t s" style="left:1043px;top:126.0px;height:40px;line-height:40px;font-size:23px;color:#c1c3c5;transform:scaleX(1.0400)">AnimalAppWebApplication.java</span>
<svg style="left:1390px;top:137px" width="18" height="18" viewBox="0 0 18 18"><path d="M1.5 1.5 L16.5 16.5 M16.5 1.5 L1.5 16.5" stroke="#74777a" stroke-width="1.8"/></svg>
<div style="left:775px;top:677px;width:1126px;height:42px;background:#2e373b;"></div>
<div style="left:943px;top:173px;width:1px;height:1558px;background:#2e373b;"></div>
<span class="t m" style="left:747.28px;top:174.8px;width:74.72px;text-align:right;height:42px;line-height:42px;font-size:29.6px;color:#8a9fa3">1</span>
<span class="t m" style="left:747.28px;top:216.8px;width:74.72px;text-align:right;height:42px;line-height:42px;font-size:29.6px;color:#8a9fa3">2</span>
<span class="t m" style="left:747.28px;top:258.8px;width:74.72px;text-align:right;height:42px;line-height:42px;font-size:29.6px;color:#8a9fa3">15</span>
<span class="t m" style="left:747.28px;top:300.8px;width:74.72px;text-align:right;height:42px;line-height:42px;font-size:29.6px;color:#8a9fa3">16</span>
<span class="t m" style="left:747.28px;top:342.8px;width:74.72px;text-align:right;height:42px;line-height:42px;font-size:29.6px;color:#8a9fa3">17</span>
<span class="t m" style="left:747.28px;top:384.8px;width:74.72px;text-align:right;height:42px;line-height:42px;font-size:29.6px;color:#8a9fa3">18</span>
<span class="t m" style="left:747.28px;top:426.8px;width:74.72px;text-align:right;height:42px;line-height:42px;font-size:29.6px;color:#8a9fa3">19</span>
<span class="t m" style="left:747.28px;top:468.8px;width:74.72px;text-align:right;height:42px;line-height:42px;font-size:29.6px;color:#8a9fa3">20</span>
<span class="t m" style="left:747.28px;top:510.8px;width:74.72px;text-align:right;height:42px;line-height:42px;font-size:29.6px;color:#8a9fa3">21</span>
<span class="t m" style="left:747.28px;top:552.8px;width:74.72px;text-align:right;height:42px;line-height:42px;font-size:29.6px;color:#8a9fa3">22</span>
<span class="t m" style="left:747.28px;top:594.8px;width:74.72px;text-align:right;height:42px;line-height:42px;font-size:29.6px;color:#8a9fa3">23</span>
<span class="t m" style="left:747.28px;top:636.8px;width:74.72px;text-align:right;height:42px;line-height:42px;font-size:29.6px;color:#8a9fa3">24</span>
<span class="t m" style="left:747.28px;top:678.8px;width:74.72px;text-align:right;height:42px;line-height:42px;font-size:29.6px;color:#8a9fa3">25</span>
<span class="t m" style="left:747.28px;top:720.8px;width:74.72px;text-align:right;height:42px;line-height:42px;font-size:29.6px;color:#8a9fa3">26</span>
<span class="t m" style="left:747.28px;top:762.8px;width:74.72px;text-align:right;height:42px;line-height:42px;font-size:29.6px;color:#8a9fa3">27</span>
<span class="t m" style="left:747.28px;top:804.8px;width:74.72px;text-align:right;height:42px;line-height:42px;font-size:29.6px;color:#8a9fa3">28</span>
<span class="t m" style="left:747.28px;top:846.8px;width:74.72px;text-align:right;height:42px;line-height:42px;font-size:29.6px;color:#8a9fa3">29</span>
<span class="t m" style="left:747.28px;top:888.8px;width:74.72px;text-align:right;height:42px;line-height:42px;font-size:29.6px;color:#8a9fa3">30</span>
<span class="t m" style="left:747.28px;top:930.8px;width:74.72px;text-align:right;height:42px;line-height:42px;font-size:29.6px;color:#8a9fa3">31</span>
<span class="t m" style="left:747.28px;top:972.8px;width:74.72px;text-align:right;height:42px;line-height:42px;font-size:29.6px;color:#8a9fa3">34</span>
<span class="t m" style="left:747.28px;top:1014.8px;width:74.72px;text-align:right;height:42px;line-height:42px;font-size:29.6px;color:#8a9fa3">35</span>
<span class="t m" style="left:747.28px;top:1056.8px;width:74.72px;text-align:right;height:42px;line-height:42px;font-size:29.6px;color:#8a9fa3">36</span>
<div style="left:958px;top:173px;width:945px;height:924px;overflow:hidden"><span class="t m cl" style="left:0;top:2.2px"><span style="color:#9ccc65">package</span><span style="color:#6d9cc4"> cn.common</span><span style="color:#eeeac0">;</span></span><span class="t m cl" style="left:0;top:44.2px"><span style="color:#9ccc65">import </span></span><span class="t m cl" style="left:0;top:128.2px"><span style="color:#8c9ba5">/**</span></span><span class="t m cl" style="left:0;top:170.2px"><span style="color:#8c9ba5"> * </span><span style="color:#f0f0ee">@author</span><span style="color:#8c9ba5"> create by singer - Singer email:singer-coder@qq.com</span></span><div style="left:56.04px;top:210px;width:224.16px;height:42px;background:#52503b"></div><span class="t m cl" style="left:0;top:212.2px"><span style="color:#8c9ba5"> * </span><span style="color:#f0f0ee">@packageName</span><span style="color:#8c9ba5"> cn.common</span></span><div style="left:56.04px;top:252px;width:242.84px;height:42px;background:#52503b"></div><span class="t m cl" style="left:0;top:254.2px"><span style="color:#8c9ba5"> * </span><span style="color:#f0f0ee">@Description:</span><span style="color:#8c9ba5"> </span></span><span class="t m cl" style="left:0;top:296.2px"><span style="color:#8c9ba5"> * </span><span style="color:#f0f0ee">@date</span><span style="color:#8c9ba5"> 2021-12-01</span></span><span class="t m cl" style="left:0;top:338.2px"><span style="color:#8c9ba5"> */</span></span><span class="t m cl" style="left:0;top:380.2px"><span style="color:#b397d4">@SpringBootApplication</span></span><span class="t m cl" style="left:0;top:422.2px"><span style="color:#b397d4">@MapperScan</span><span style="color:#eeeac0">({</span><span style="color:#f08a24">"cn.common.repository.repository"</span><span style="color:#eeeac0">})</span></span><span class="t m cl" style="left:0;top:464.2px"><span style="color:#b397d4">@EnableScheduling</span></span><div style="left:18.68px;top:504px;width:93.40px;height:42px;background:#6b6c6b"></div><span class="t m cl" style="left:0;top:506.2px"><span style="color:#b397d4">@</span><span style="color:#b397d4">Slf4j</span></span><span class="t m cl" style="left:0;top:548.2px"><span style="color:#b397d4">@EnableAspectJAutoProxy</span><span style="color:#eeeac0">(</span><span style="color:#e6e9ec">exposeProxy</span><span style="color:#eeeac0"> = </span><span style="color:#9ccc65">true</span><span style="color:#eeeac0">)</span></span><span class="t m cl" style="left:0;top:590.2px"><span style="color:#b397d4">@Configuration</span></span><span class="t m cl" style="left:0;top:632.2px"><span style="color:#b397d4">@EnableTransactionManagement</span></span><span class="t m cl" style="left:0;top:674.2px"><span style="color:#9ccc65">public class </span><span style="color:#6d9cc4">AnimalAppWebApplication</span><span style="color:#eeeac0"> {</span></span><div style="left:784.56px;top:756px;width:56.04px;height:42px;background:#8a4a0a"></div><span class="t m cl" style="left:0;top:758.2px"><span style="color:#9ccc65">    public static void </span><span style="color:#6d9cc4">main</span><span style="color:#eeeac0">(</span><span style="color:#6d9cc4">String</span><span style="color:#eeeac0">[]</span><span style="color:#e6e9ec"> args</span><span style="color:#eeeac0">)</span><span style="color:#eeeac0"> { </span><span style="color:#6d9cc4">SpringApplication</span><span style="color:#eeeac0">.</span><span style="color:#6d9cc4">run</span><span style="color:#eeeac0">(</span></span><span class="t m cl" style="left:0;top:842.2px"><span style="color:#eeeac0">}</span></span><div style="left:130.26px;top:42px;width:53.04px;height:38px;background:#5a5c5c;border:2.5px solid #a3d4c4"></div><div style="left:137.26px;top:68px;width:5px;height:5px;border-radius:3px;background:#f2f2f2"></div><div style="left:155.94px;top:68px;width:5px;height:5px;border-radius:3px;background:#f2f2f2"></div><div style="left:174.62px;top:68px;width:5px;height:5px;border-radius:3px;background:#f2f2f2"></div><div style="left:111.08px;top:504px;width:4px;height:42px;background:#e2e2de"></div><svg style="left:317.56px;top:254px" width="104" height="40" viewBox="0 0 104 40"><g transform="translate(-2.05 -0.88) scale(1.0345 0.942)"><g transform="translate(2 0)" fill="none" stroke="#8c9ba5" stroke-width="2.3"><path d="M13 3 L16 7 M5 9 H27 V17 H5 M5 9 V22 Q5 32 1 36 M10 23 H26 V35 H10 Z"/></g><g transform="translate(35 0)" fill="none" stroke="#8c9ba5" stroke-width="2.3"><path d="M2 9 H14 M0 17 H16 M8 17 Q7 25 2 31 L14 29 M11 23 L15 33 M18 12 H30 Q30 30 27 34 L23 32 M24 3 Q24 25 16 36"/></g><g transform="translate(68 0)" fill="none" stroke="#8c9ba5" stroke-width="2.3"><path d="M15 2 V20 M3 11 H28 M6 4 L10 9 M25 4 L21 9 M14 12 Q9 18 2 20 M16 12 Q21 18 28 20 M1 25 H30 M15 21 Q13 31 2 36 M16 25 Q20 33 29 36"/></g></g></svg></div>
<svg style="left:836px;top:552px" width="36" height="36" viewBox="0 0 36 36"><path d="M6 6.3 A15.6 15.6 0 0 1 28.5 30 Z" fill="#4fa63a" stroke="#1f4a14" stroke-width="1.2"/><path d="M20.5 25.8 L27.3 31.8" stroke="#8fbf7f" stroke-width="2.2"/><path d="M3.1 9.2 L7.6 13.2 L1 15.2 Z" fill="#8db57b"/><circle cx="8.9" cy="22.5" r="6.6" fill="#2a2f3a" stroke="#d5d9e2" stroke-width="2.6"/><path d="M13.6 27.3 L19.8 33.4" stroke="#d5d9e2" stroke-width="3.2" stroke-linecap="round"/></svg>
<svg style="left:836px;top:846px" width="38" height="38" viewBox="0 0 38 38"><circle cx="16" cy="16.4" r="15.6" fill="#4fa63a" stroke="#1f4a14" stroke-width="1.2"/><path d="M5.2 5.2 L14.7 14.7" stroke="#1f4a14" stroke-width="2.4"/><circle cx="23.5" cy="23.5" r="11" fill="#14303a"/><circle cx="23.5" cy="23.5" r="9.3" fill="#4a9ed0"/><circle cx="23.3" cy="23.3" r="2.2" fill="#6ab4c8"/><path d="M26.2 20.6 A3.9 3.9 0 1 0 26.2 26" fill="none" stroke="#1c4a6a" stroke-width="2"/><path d="M22.2 26.8 H35.1 L28.6 35.1 Z" fill="#d3e3dc"/></svg>
<svg style="left:887px;top:852px" width="20" height="27" viewBox="0 0 20 27"><path d="M0 0 L19.5 13.5 L0 27 Z" fill="#4db052"/></svg>
<svg style="left:865px;top:936px" width="20" height="27" viewBox="0 0 20 27"><path d="M0 0 L19.5 13.5 L0 27 Z" fill="#4db052"/></svg>
<svg style="left:933px;top:226px" width="21" height="21" viewBox="0 0 21 21"><rect x="1" y="1" width="19" height="19" fill="#272f32" stroke="#313b40" stroke-width="1.6"/><path d="M5 10.5 H16" stroke="#313b40" stroke-width="1.6"/><path d="M10.5 5 V16" stroke="#313b40" stroke-width="1.6"/></svg>
<svg style="left:933px;top:309px" width="21" height="22" viewBox="0 0 21 22"><path d="M1 1 V13 L10.5 21 L20 13 V1 Z" fill="#272f32" stroke="#313b40" stroke-width="1.6"/><path d="M5 11 H16" stroke="#313b40" stroke-width="1.6"/></svg>
<svg style="left:933px;top:519px" width="21" height="22" viewBox="0 0 21 22"><path d="M1 21 V9 L10.5 1 L20 9 V21 Z" fill="#272f32" stroke="#313b40" stroke-width="1.6"/><path d="M5 11 H16" stroke="#313b40" stroke-width="1.6"/></svg>
<svg style="left:933px;top:561px" width="21" height="22" viewBox="0 0 21 22"><path d="M1 1 V13 L10.5 21 L20 13 V1 Z" fill="#272f32" stroke="#313b40" stroke-width="1.6"/><path d="M5 11 H16" stroke="#313b40" stroke-width="1.6"/></svg>
<svg style="left:933px;top:813px" width="21" height="22" viewBox="0 0 21 22"><path d="M1 21 V9 L10.5 1 L20 9 V21 Z" fill="#272f32" stroke="#313b40" stroke-width="1.6"/><path d="M5 11 H16" stroke="#313b40" stroke-width="1.6"/></svg>
<svg style="left:933px;top:940px" width="21" height="21" viewBox="0 0 21 21"><rect x="1" y="1" width="19" height="19" fill="#272f32" stroke="#313b40" stroke-width="1.6"/><path d="M5 10.5 H16" stroke="#313b40" stroke-width="1.6"/><path d="M10.5 5 V16" stroke="#313b40" stroke-width="1.6"/></svg>
<svg style="left:1763px;top:186px" width="25" height="24" viewBox="0 0 25 24"><path d="M12.5 1 L24.5 23 H0.5 Z" fill="#b8b419"/><rect x="10.8" y="9" width="3.6" height="7" fill="#3a3a20"/><rect x="10.8" y="18" width="3.6" height="3.4" fill="#3a3a20"/></svg>
<span class="t s" style="left:1795px;top:179.0px;height:40px;line-height:40px;font-size:22px;color:#787b7d;transform:scaleX(0.8980)">7</span>
<svg style="left:1827px;top:192px" width="20" height="13" viewBox="0 0 20 13"><path d="M2 10.8 L10 2.8 L18 10.8" fill="none" stroke="#c4c6c8" stroke-width="2.6"/></svg>
<svg style="left:1869px;top:194px" width="20" height="13" viewBox="0 0 20 13"><path d="M2 2.2 L10 10.2 L18 2.2" fill="none" stroke="#c4c6c8" stroke-width="2.6"/></svg>
<div style="left:1875px;top:267px;width:28px;height:4px;background:#6e7072;"></div>
<div style="left:1875px;top:435px;width:28px;height:4px;background:#b8b419;"></div>
<div style="left:1875px;top:477px;width:28px;height:4px;background:#b8b419;"></div>
<div style="left:1875px;top:729px;width:28px;height:4px;background:#6e7072;"></div>
<div style="left:1903px;top:118px;width:2px;height:1613px;background:#2f3133;"></div>
<span class="t s" style="left:1918px;top:126.0px;height:40px;line-height:40px;font-size:26px;color:#c1c3c5;transform:scaleX(1.0122)">Maven</span>
<div style="left:1905px;top:171px;width:948px;height:2px;background:#323436;"></div>
<svg style="left:2762px;top:132px" width="26" height="26" viewBox="0 0 26 26"><rect x="9.36" y="0" width="7.28" height="26.00" rx="1" transform="rotate(0 13.0 13.0)" fill="#c3c5c7"/><rect x="9.36" y="0" width="7.28" height="26.00" rx="1" transform="rotate(60 13.0 13.0)" fill="#c3c5c7"/><rect x="9.36" y="0" width="7.28" height="26.00" rx="1" transform="rotate(120 13.0 13.0)" fill="#c3c5c7"/><circle cx="13.0" cy="13.0" r="9.62" fill="#c3c5c7"/><circle cx="13.0" cy="13.0" r="4.42" fill="#303335"/></svg>
<div style="left:2815px;top:143px;width:25px;height:4px;background:#c3c5c7;"></div>
<div style="left:1905px;top:228px;width:948px;height:2px;background:#37393b;"></div>
<svg style="left:1921px;top:187.5px" width="28" height="27" viewBox="0 0 28 27"><path d="M23.6 11 A10 10 0 0 0 6 6.8" fill="none" stroke="#c3c5c7" stroke-width="4.4"/><path d="M4.4 16 A10 10 0 0 0 22 20.2" fill="none" stroke="#c3c5c7" stroke-width="4.4"/><path d="M1 1.5 V12.5 H12 Z" fill="#c3c5c7"/><path d="M27 25.5 V14.5 H16 Z" fill="#c3c5c7"/></svg>
<svg style="left:1972px;top:188px" width="34" height="30" viewBox="0 0 34 30"><path d="M0 0 H9 L12 4.5 H25 V12 H17 V20 H0 Z" fill="#c3c5c7"/><path d="M29.5 18.5 A6 6 0 0 0 19.5 17" fill="none" stroke="#c3c5c7" stroke-width="2.2"/><path d="M17.5 23 A6 6 0 0 0 28 24.5" fill="none" stroke="#c3c5c7" stroke-width="2.2"/><path d="M17 13.5 V19.5 H23 Z" fill="#c3c5c7"/><path d="M30.5 28 V22 H24.5 Z" fill="#c3c5c7"/></svg>
<svg style="left:2026px;top:187px" width="32" height="32" viewBox="0 0 32 32"><path d="M12.5 1 V15" stroke="#c3c5c7" stroke-width="3.4"/><path d="M5 10 H20 L12.5 18.5 Z" fill="#c3c5c7"/><rect x="0" y="22" width="25" height="3.4" fill="#c3c5c7"/><path d="M19 26.5 H31 L25 32 Z" fill="#c3c5c7"/></svg>
<div style="left:2071px;top:181px;width:2px;height:40px;background:#47494b;"></div>
<svg style="left:2094px;top:190px" width="22" height="22" viewBox="0 0 22 22"><path d="M11 0 V22 M0 11 H22" stroke="#c3c5c7" stroke-width="3.6"/></svg>
<div style="left:2137px;top:181px;width:2px;height:40px;background:#47494b;"></div>
<svg style="left:2163px;top:189px" width="21" height="24" viewBox="0 0 21 24"><path d="M0 0 L21 12 L0 24 Z" fill="#54575a"/></svg>
<svg style="left:2205px;top:186px" width="38" height="30" viewBox="0 0 38 30"><text x="3" y="25.00" font-family="Liberation Sans" font-weight="bold" font-style="italic" font-size="41.51" fill="#c3c5c7" stroke="#c3c5c7" stroke-width="1.1" textLength="29" lengthAdjust="spacingAndGlyphs">m</text></svg>
<svg style="left:2260px;top:186px" width="31" height="30" viewBox="0 0 31 30"><rect x="1" y="11.2" width="10.5" height="7.6" fill="#c3c5c7"/><rect x="18.2" y="11.2" width="11.2" height="7.6" fill="#c3c5c7"/><path d="M8.2 29 L14 1 M15 29 L20.8 1" stroke="#c3c5c7" stroke-width="2.8"/></svg>
<svg style="left:2312px;top:186px" width="30" height="30" viewBox="0 0 30 30"><circle cx="15" cy="15" r="14.3" fill="#4697c2"/><path d="M18 6 L7 16.5 H14 L12 24 L23 13.5 H16 Z" fill="#1f4860"/></svg>
<svg style="left:2365px;top:187px" width="29" height="28" viewBox="0 0 29 28"><rect x="0" y="0" width="29" height="6" fill="#9da5ad"/><rect x="0" y="22" width="29" height="6" fill="#9da5ad"/><path d="M7.5 22 V10 M3 13 L7.5 8 L12 13" fill="none" stroke="#40bde8" stroke-width="2.6"/><path d="M21.5 22 V10" stroke="#40bde8" stroke-width="2.6" stroke-dasharray="3 2"/><path d="M17 13 L21.5 8 L26 13" fill="none" stroke="#40bde8" stroke-width="2.6"/></svg>
<svg style="left:2418px;top:188px" width="26" height="26" viewBox="0 0 26 26"><rect x="0" y="11.3" width="26" height="3.4" fill="#c3c5c7"/><path d="M13 8.5 L19.5 1.5 H6.5 Z M13 17.5 L19.5 24.5 H6.5 Z" fill="#c3c5c7"/></svg>
<div style="left:2463px;top:181px;width:2px;height:40px;background:#47494b;"></div>
<svg style="left:2483px;top:186px" width="34" height="34" viewBox="0 0 34 34"><path d="M2 27 L15 14" stroke="#c3c5c7" stroke-width="5.5" stroke-linecap="round"/><path d="M26 4.5 A8 8 0 1 0 29.5 11 L24 13.5 L19.5 9 L21.5 3.5 Z" fill="#c3c5c7" transform="rotate(-8 20 10)"/><path d="M21 27 H33 L27 33 Z" fill="#c3c5c7"/></svg>
<div style="left:1905px;top:231px;width:948px;height:40px;background:#0d293e;"></div>
<svg style="left:1920px;top:240px" width="16" height="22" viewBox="0 0 16 22"><path d="M3.5 2.5 L12 11 L3.5 19.5" fill="none" stroke="#afb1b3" stroke-width="2.6"/></svg>
<svg style="left:1958px;top:236px" width="30" height="32" viewBox="0 0 30 32"><path d="M9 2 V7.7 H2.2 Z" fill="#9aa6b0"/><path d="M11.1 1.1 H20.9 V28.5 H1 V11.2 H11.1 Z" fill="#9aa6b0"/><rect x="7" y="18.2" width="21" height="13" fill="#0d293e"/><text x="8.6" y="30.5" font-family="Liberation Sans" font-weight="bold" font-style="italic" font-size="20.8" fill="#4cc0e6" stroke="#4cc0e6" stroke-width="0.5" textLength="17" lengthAdjust="spacingAndGlyphs">m</text></svg>
<span class="t s" style="left:1992px;top:232.0px;height:40px;line-height:40px;font-size:26px;color:#d4d6d8;transform:scaleX(1.0807)">animal<i class="hy">-</i>app<i class="hy">-</i>api</span>
<span class="t s" style="left:2198.5px;top:232.0px;height:40px;line-height:40px;font-size:26px;color:#7f8b99;transform:scaleX(1.1107)">(root)</span>
<svg style="left:1920px;top:280px" width="16" height="22" viewBox="0 0 16 22"><path d="M3.5 2.5 L12 11 L3.5 19.5" fill="none" stroke="#afb1b3" stroke-width="2.6"/></svg>
<svg style="left:1958px;top:276px" width="30" height="32" viewBox="0 0 30 32"><path d="M9 2 V7.7 H2.2 Z" fill="#9aa6b0"/><path d="M11.1 1.1 H20.9 V28.5 H1 V11.2 H11.1 Z" fill="#9aa6b0"/><rect x="7" y="18.2" width="21" height="13" fill="#3c3f41"/><text x="8.6" y="30.5" font-family="Liberation Sans" font-weight="bold" font-style="italic" font-size="20.8" fill="#4cc0e6" stroke="#4cc0e6" stroke-width="0.5" textLength="17" lengthAdjust="spacingAndGlyphs">m</text></svg>
<span class="t s" style="left:1992px;top:272.0px;height:40px;line-height:40px;font-size:26px;color:#c1c3c5;transform:scaleX(1.1057)">platform<i class="hy">-</i>api<i class="hy">-</i>web</span>
<svg style="left:1920px;top:320px" width="16" height="22" viewBox="0 0 16 22"><path d="M3.5 2.5 L12 11 L3.5 19.5" fill="none" stroke="#afb1b3" stroke-width="2.6"/></svg>
<svg style="left:1958px;top:316px" width="30" height="32" viewBox="0 0 30 32"><path d="M9 2 V7.7 H2.2 Z" fill="#9aa6b0"/><path d="M11.1 1.1 H20.9 V28.5 H1 V11.2 H11.1 Z" fill="#9aa6b0"/><rect x="7" y="18.2" width="21" height="13" fill="#3c3f41"/><text x="8.6" y="30.5" font-family="Liberation Sans" font-weight="bold" font-style="italic" font-size="20.8" fill="#4cc0e6" stroke="#4cc0e6" stroke-width="0.5" textLength="17" lengthAdjust="spacingAndGlyphs">m</text></svg>
<span class="t s" style="left:1992px;top:312.0px;height:40px;line-height:40px;font-size:26px;color:#c1c3c5;transform:scaleX(1.1124)">platform<i class="hy">-</i>common</span>
<svg style="left:1920px;top:360px" width="16" height="22" viewBox="0 0 16 22"><path d="M3.5 2.5 L12 11 L3.5 19.5" fill="none" stroke="#afb1b3" stroke-width="2.6"/></svg>
<svg style="left:1958px;top:356px" width="30" height="32" viewBox="0 0 30 32"><path d="M9 2 V7.7 H2.2 Z" fill="#9aa6b0"/><path d="M11.1 1.1 H20.9 V28.5 H1 V11.2 H11.1 Z" fill="#9aa6b0"/><rect x="7" y="18.2" width="21" height="13" fill="#3c3f41"/><text x="8.6" y="30.5" font-family="Liberation Sans" font-weight="bold" font-style="italic" font-size="20.8" fill="#4cc0e6" stroke="#4cc0e6" stroke-width="0.5" textLength="17" lengthAdjust="spacingAndGlyphs">m</text></svg>
<span class="t s" style="left:1992px;top:352.0px;height:40px;line-height:40px;font-size:26px;color:#c1c3c5;transform:scaleX(1.1276)">platform<i class="hy">-</i>interaction</span>
<svg style="left:1920px;top:400px" width="16" height="22" viewBox="0 0 16 22"><path d="M3.5 2.5 L12 11 L3.5 19.5" fill="none" stroke="#afb1b3" stroke-width="2.6"/></svg>
<svg style="left:1958px;top:396px" width="30" height="32" viewBox="0 0 30 32"><path d="M9 2 V7.7 H2.2 Z" fill="#9aa6b0"/><path d="M11.1 1.1 H20.9 V28.5 H1 V11.2 H11.1 Z" fill="#9aa6b0"/><rect x="7" y="18.2" width="21" height="13" fill="#3c3f41"/><text x="8.6" y="30.5" font-family="Liberation Sans" font-weight="bold" font-style="italic" font-size="20.8" fill="#4cc0e6" stroke="#4cc0e6" stroke-width="0.5" textLength="17" lengthAdjust="spacingAndGlyphs">m</text></svg>
<span class="t s" style="left:1992px;top:392.0px;height:40px;line-height:40px;font-size:26px;color:#c1c3c5;transform:scaleX(1.1278)">platform<i class="hy">-</i>repository</span>
<svg style="left:1920px;top:440px" width="16" height="22" viewBox="0 0 16 22"><path d="M3.5 2.5 L12 11 L3.5 19.5" fill="none" stroke="#afb1b3" stroke-width="2.6"/></svg>
<svg style="left:1958px;top:436px" width="30" height="32" viewBox="0 0 30 32"><path d="M9 2 V7.7 H2.2 Z" fill="#9aa6b0"/><path d="M11.1 1.1 H20.9 V28.5 H1 V11.2 H11.1 Z" fill="#9aa6b0"/><rect x="7" y="18.2" width="21" height="13" fill="#3c3f41"/><text x="8.6" y="30.5" font-family="Liberation Sans" font-weight="bold" font-style="italic" font-size="20.8" fill="#4cc0e6" stroke="#4cc0e6" stroke-width="0.5" textLength="17" lengthAdjust="spacingAndGlyphs">m</text></svg>
<span class="t s" style="left:1992px;top:432.0px;height:40px;line-height:40px;font-size:26px;color:#c1c3c5;transform:scaleX(1.0982)">platform<i class="hy">-</i>service</span>
<div style="left:2853px;top:118px;width:1px;height:1613px;background:#323436;"></div>
<div style="left:2854px;top:291px;width:41px;height:142px;background:#2c2e30;"></div>
<svg style="left:2864px;top:139px" width="22" height="25" viewBox="0 0 22 25"><ellipse cx="11" cy="4.5" rx="10.5" ry="4.5" fill="#c3c5c7"/><path d="M0.5 8 A10.5 4.5 0 0 0 21.5 8 V12 A10.5 4.5 0 0 1 0.5 12 Z" fill="#c3c5c7"/><path d="M0.5 14.5 A10.5 4.5 0 0 0 21.5 14.5 V18.5 A10.5 4.5 0 0 1 0.5 18.5 Z" fill="#c3c5c7"/><path d="M0.5 21 A10.5 4.5 0 0 0 21.5 21 V21.5 A10.5 4.5 0 0 1 0.5 21.5 Z" fill="#c3c5c7"/></svg>
<span class="t s" style="left:2874px;top:159.0px;height:30px;line-height:30px;font-size:23px;color:#c1c3c5;transform:rotate(90deg) scaleX(0.9851)">Database</span>
<svg style="left:2858.5px;top:313.5px" width="34" height="25.5" viewBox="0 0 34 25.5"><text x="3" y="20.50" font-family="Liberation Sans" font-weight="bold" font-style="italic" font-size="33.02" fill="#c3c5c7" stroke="#c3c5c7" stroke-width="0.9" textLength="25" lengthAdjust="spacingAndGlyphs">m</text></svg>
<span class="t s" style="left:2874px;top:333.0px;height:30px;line-height:30px;font-size:23px;color:#ffffff;transform:rotate(90deg) scaleX(0.9704)">Maven</span>
<div style="left:15px;top:1731px;width:2880px;height:1px;background:#2d2f31;"></div>
<div style="left:15px;top:1774px;width:2880px;height:1px;background:#46494b;"></div>
<svg style="left:78px;top:1742px" width="18" height="24" viewBox="0 0 18 24"><circle cx="4" cy="3.5" r="3.3" fill="#c3c5c7"/><circle cx="4" cy="20.5" r="3.3" fill="#c3c5c7"/><circle cx="14" cy="6.5" r="3.3" fill="#c3c5c7"/><path d="M4 3.5 V20.5 M14 6.5 C14 13 4 11 4 17" fill="none" stroke="#c3c5c7" stroke-width="2.4"/></svg>
<span class="t s" style="left:109px;top:1734.0px;height:40px;line-height:40px;font-size:24.5px;color:#c1c3c5;transform:scaleX(0.9904)"><u>9</u>: Git</span>
<svg style="left:209px;top:1744px" width="22" height="20" viewBox="0 0 22 20"><rect x="0" y="0" width="4" height="4" fill="#c3c5c7"/><rect x="6.5" y="0" width="15.5" height="4" fill="#c3c5c7"/><rect x="0" y="8" width="4" height="4" fill="#c3c5c7"/><rect x="6.5" y="8" width="15.5" height="4" fill="#c3c5c7"/><rect x="0" y="16" width="4" height="4" fill="#c3c5c7"/><rect x="6.5" y="16" width="15.5" height="4" fill="#c3c5c7"/></svg>
<span class="t s" style="left:239px;top:1734.0px;height:40px;line-height:40px;font-size:24.5px;color:#c1c3c5;transform:scaleX(0.9098)">TODO</span>
<svg style="left:348px;top:1743px" width="22" height="22" viewBox="0 0 22 22"><circle cx="11" cy="11" r="10.8" fill="#c3c5c7"/><rect x="9.3" y="4.5" width="3.4" height="8.5" fill="#3c3f41"/><rect x="9.3" y="15" width="3.4" height="3.4" fill="#3c3f41"/></svg>
<span class="t s" style="left:379.5px;top:1734.0px;height:40px;line-height:40px;font-size:24.5px;color:#c1c3c5;transform:scaleX(0.9561)"><u>6</u>: Problems</span>
<svg style="left:548px;top:1741px" width="28" height="27" viewBox="0 0 28 27"><path d="M19 6.5 A9.5 9.5 0 1 0 10.5 20.3" fill="none" stroke="#c3c5c7" stroke-width="2.2"/><path d="M10.5 5.5 V11.5 L7 14" fill="none" stroke="#c3c5c7" stroke-width="2.2"/><path d="M13 9.5 L27 18 L13 26.5 Z" fill="#c3c5c7"/></svg>
<span class="t s" style="left:584px;top:1734.0px;height:40px;line-height:40px;font-size:24.5px;color:#c1c3c5;transform:scaleX(0.9728)">Profiler</span>
<svg style="left:701px;top:1743px" width="22" height="20" viewBox="0 0 22 20"><rect width="22" height="20" fill="#c3c5c7"/><path d="M4 4 L9 8.5 L4 13" fill="none" stroke="#3c3f41" stroke-width="2"/><path d="M10.5 15 H18" stroke="#3c3f41" stroke-width="2"/></svg>
<span class="t s" style="left:733px;top:1734.0px;height:40px;line-height:40px;font-size:24.5px;color:#c1c3c5;transform:scaleX(1.0098)">Terminal</span>
<svg style="left:868px;top:1740px" width="28" height="28" viewBox="0 0 28 28"><circle cx="16" cy="5.5" r="5" fill="#c3c5c7"/><circle cx="5.5" cy="22" r="5" fill="#c3c5c7"/><circle cx="21.5" cy="22" r="5" fill="#c3c5c7"/><path d="M16 5.5 L5.5 22 M16 5.5 L21.5 22 M2 10 L5.5 22 M26 12 L21.5 22" stroke="#c3c5c7" stroke-width="2.2"/></svg>
<span class="t s" style="left:904.5px;top:1734.0px;height:40px;line-height:40px;font-size:24.5px;color:#c1c3c5;transform:scaleX(0.9497)">Endpoints</span>
<svg style="left:1055px;top:1741px" width="27" height="26" viewBox="0 0 27 26"><path d="M13.5 0 L26.5 6.5 L13.5 13 L0.5 6.5 Z" fill="#c3c5c7"/><path d="M2 11.5 L13.5 17.5 L25 11.5 M2 17 L13.5 23 L25 17" fill="none" stroke="#c3c5c7" stroke-width="2.6"/></svg>
<span class="t s" style="left:1090px;top:1734.0px;height:40px;line-height:40px;font-size:24.5px;color:#c1c3c5;transform:scaleX(0.9416)">Dependencies</span>
<svg style="left:1284px;top:1742px" width="28" height="24" viewBox="0 0 28 24"><path d="M1 15 C1 7 8 5.5 15 5.5 C20 5.5 24 4 26 0 C29 8 28 15 23 19 C18 22.5 9 21.5 5 20.5 L2 23 Z" fill="#c3c5c7"/></svg>
<span class="t s" style="left:1319.5px;top:1734.0px;height:40px;line-height:40px;font-size:24.5px;color:#c1c3c5;transform:scaleX(0.9530)">Spring</span>
<svg style="left:2694px;top:1740px" width="28" height="28" viewBox="0 0 28 28"><circle cx="14" cy="14" r="13.5" fill="#499c54"/><rect x="14" y="14" width="14" height="14" fill="#499c54"/><text x="8.5" y="21" font-family="Liberation Sans" font-weight="bold" font-size="19" fill="#ffffff">1</text></svg>
<span class="t s" style="left:2730px;top:1734.0px;height:40px;line-height:40px;font-size:24.5px;color:#c1c3c5;transform:scaleX(0.9244)">Event Log</span>
<svg style="left:26px;top:1783px" width="26" height="24" viewBox="0 0 26 24"><rect x="5" y="1" width="19.5" height="17.5" fill="none" stroke="#c3c5c7" stroke-width="2"/><path d="M1 6 V23 H19" fill="none" stroke="#c3c5c7" stroke-width="2"/></svg>
<div style="left:76px;top:1775px;width:2147.5px;height:40px;overflow:hidden">
<span class="t s" style="left:2px;top:1.0px;height:40px;line-height:40px;font-size:24.5px;color:#c1c3c5;transform:scaleX(0.9872)">Download pre<i class="hy">-</i>built shared indexes: Reduce the indexing time and CPU load with pre<i class="hy">-</i>built JDK shared indexes // </span>
<span class="t s" style="left:1222px;top:1.0px;height:40px;line-height:40px;font-size:24.5px;color:#c1c3c5;transform:scaleX(1.0229)">Always download // </span>
<span class="t s" style="left:1443.5px;top:1.0px;height:40px;line-height:40px;font-size:24.5px;color:#c1c3c5;transform:scaleX(1.0274)">Download once // </span>
<span class="t s" style="left:1645px;top:1.0px;height:40px;line-height:40px;font-size:24.5px;color:#c1c3c5;transform:scaleX(1.0307)">Don't show again // </span>
<span class="t s" style="left:1866px;top:1.0px;height:40px;line-height:40px;font-size:24.5px;color:#c1c3c5;transform:scaleX(1.0002)">Configure... </span>
<span class="t s" style="left:1999.5px;top:1.0px;height:40px;line-height:40px;font-size:24.5px;color:#c1c3c5;transform:scaleX(0.9923)">(moments ago)</span>
</div>
<span class="t s" style="left:2288px;top:1776.0px;height:40px;line-height:40px;font-size:24.5px;color:#c1c3c5;transform:scaleX(0.9856)">25:7</span>
<span class="t s" style="left:2360px;top:1776.0px;height:40px;line-height:40px;font-size:24.5px;color:#c1c3c5;transform:scaleX(0.7869)">LF</span>
<span class="t s" style="left:2407.5px;top:1776.0px;height:40px;line-height:40px;font-size:24.5px;color:#c1c3c5;transform:scaleX(0.8995)">UTF<i class="hy">-</i>8</span>
<span class="t s" style="left:2499.5px;top:1776.0px;height:40px;line-height:40px;font-size:24.5px;color:#c1c3c5;transform:scaleX(1.0092)">Tab*</span>
<svg style="left:2577px;top:1781px" width="20" height="27" viewBox="0 0 18 24"><circle cx="4" cy="3.5" r="3.3" fill="#c3c5c7"/><circle cx="4" cy="20.5" r="3.3" fill="#c3c5c7"/><circle cx="14" cy="6.5" r="3.3" fill="#c3c5c7"/><path d="M4 3.5 V20.5 M14 6.5 C14 13 4 11 4 17" fill="none" stroke="#c3c5c7" stroke-width="2.4"/></svg>
<span class="t s" style="left:2607.5px;top:1776.0px;height:40px;line-height:40px;font-size:24.5px;color:#c1c3c5;transform:scaleX(0.9490)">dev</span>
<svg style="left:2665px;top:1783px" width="24" height="24" viewBox="0 0 24 24"><rect x="7" y="10.5" width="16" height="12" fill="#c3c5c7"/><path d="M2 11 V7 A4.5 4.5 0 0 1 11 7 V11" fill="none" stroke="#c3c5c7" stroke-width="2.2"/></svg>
<div style="left:2703px;top:1776px;width:112px;height:38px;background:#5d6062;"></div>
<div style="left:2815px;top:1776px;width:6px;height:38px;background:#54575a;"></div>
<span class="t s" style="left:2721.5px;top:1776.0px;height:40px;line-height:40px;font-size:24.5px;color:#c1c3c5;transform:scaleX(1.0133)">611 of 1024M</span>
<div style="left:2888px;top:15px;width:7px;height:1800px;background:rgba(0,0,0,0.07);"></div>
</body></html>
